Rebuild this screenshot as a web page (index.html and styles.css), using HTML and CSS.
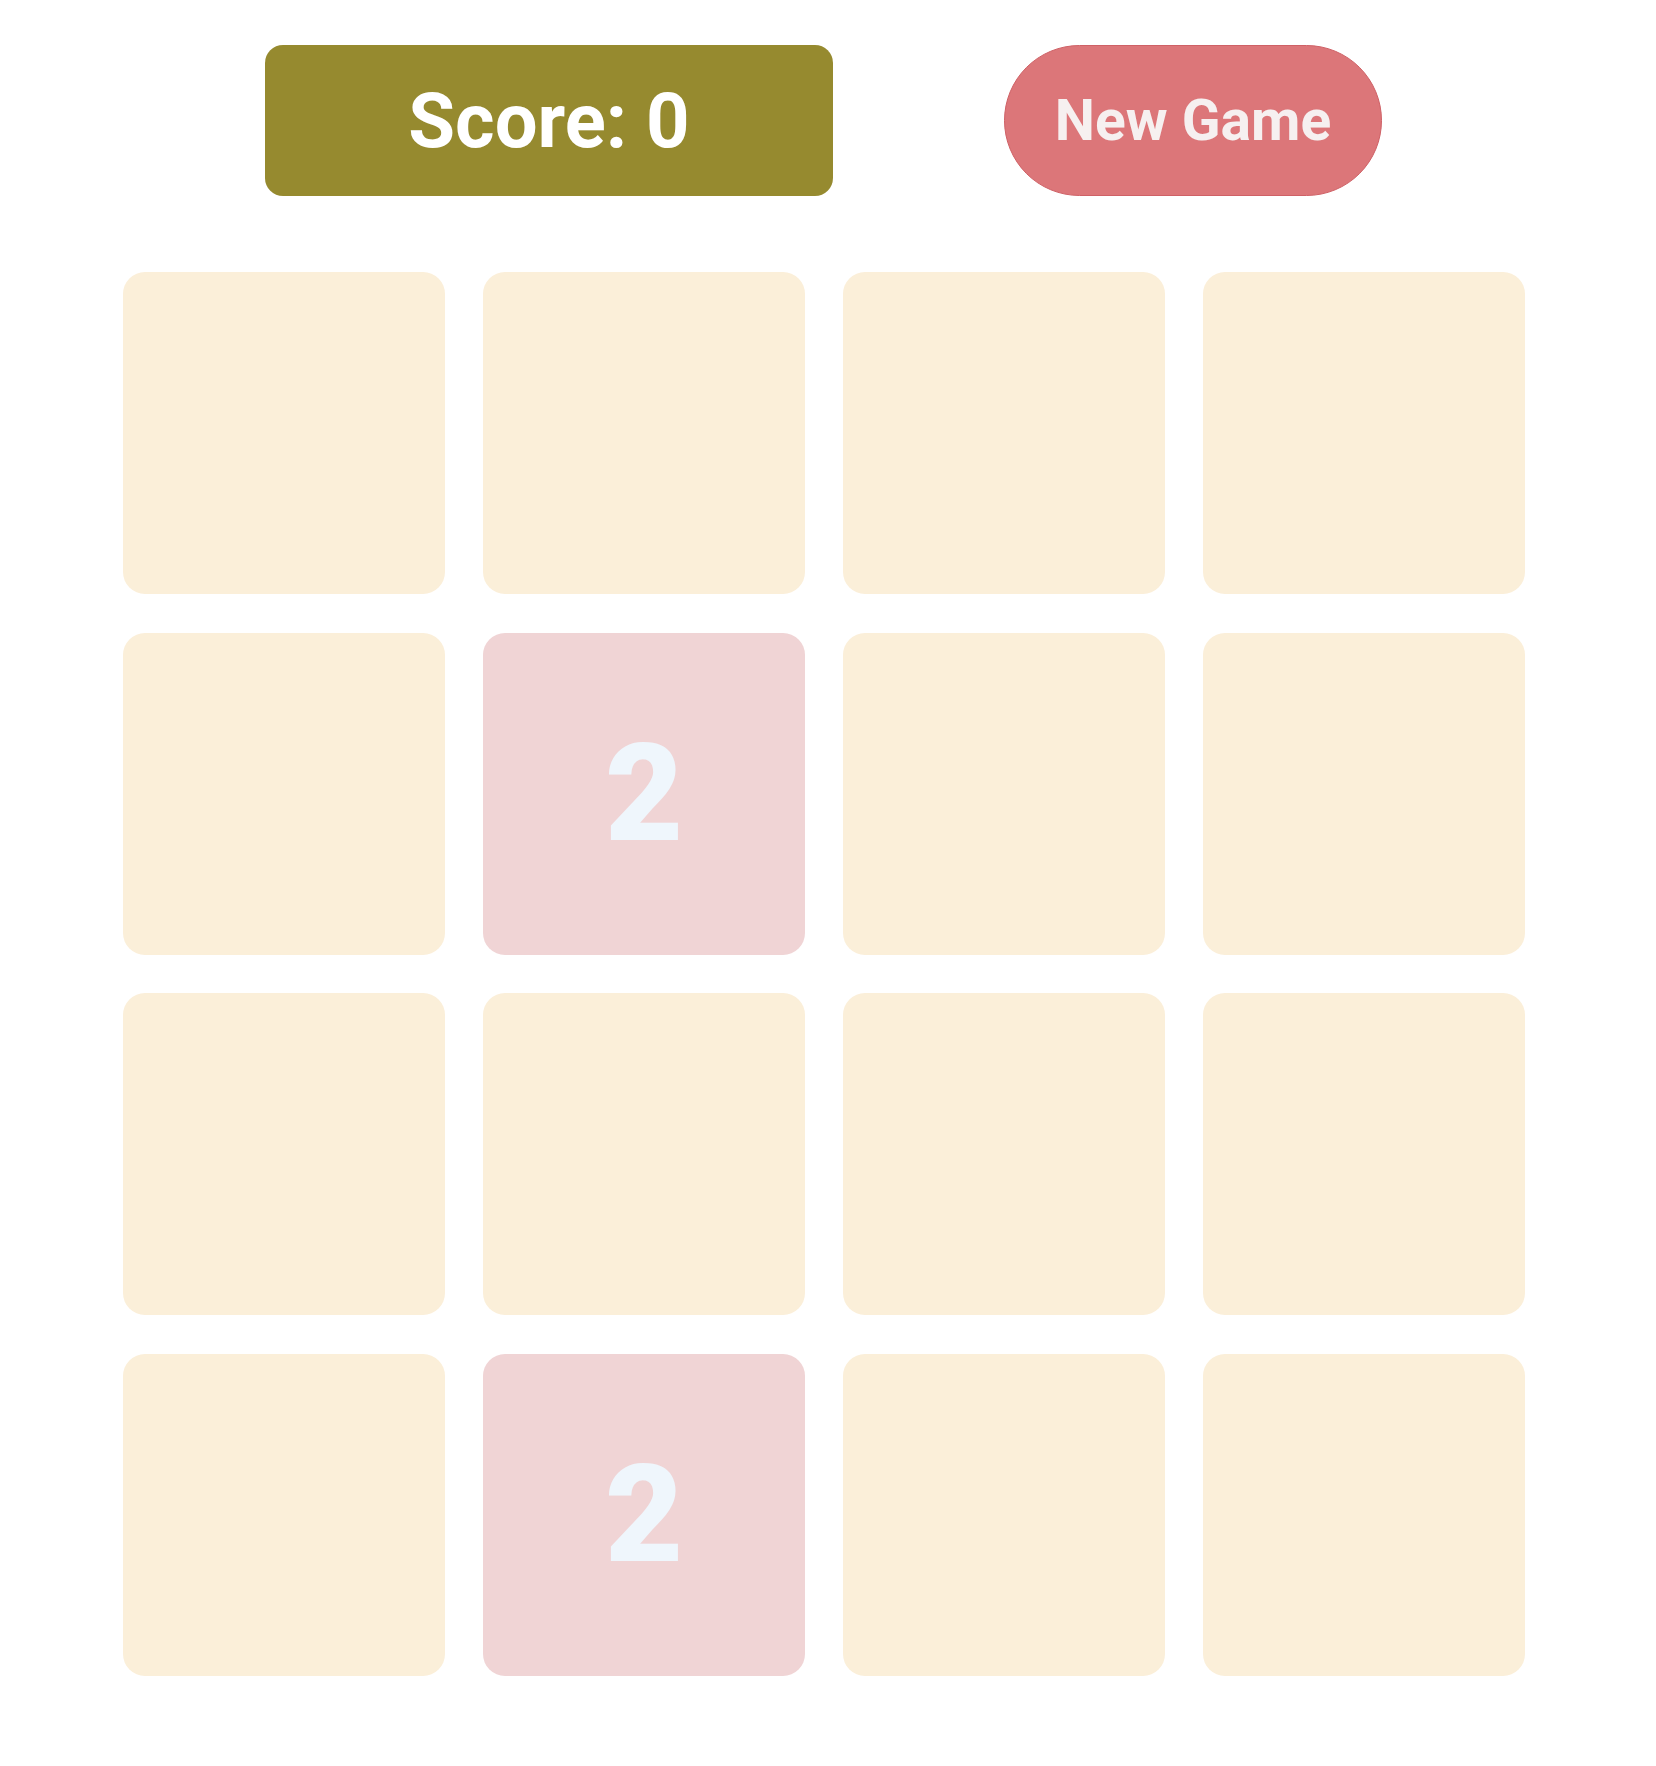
FILE: index.html
```html
<!DOCTYPE html>
<html>
<head>
<meta charset="utf-8">
<title>2048</title>
<link rel="stylesheet" href="styles.css">
</head>
<body>
<div class="game">
  <div class="header">
    <div class="score">Score: 0</div>
    <button class="new-game">New Game</button>
  </div>
  <div class="board">
    <div class="tile"></div><div class="tile"></div><div class="tile"></div><div class="tile"></div>
    <div class="tile"></div><div class="tile tile-2">2</div><div class="tile"></div><div class="tile"></div>
    <div class="tile"></div><div class="tile"></div><div class="tile"></div><div class="tile"></div>
    <div class="tile"></div><div class="tile tile-2">2</div><div class="tile"></div><div class="tile"></div>
  </div>
</div>
</body>
</html>
```
FILE: styles.css
```css
html, body {
  margin: 0;
  padding: 0;
  background: #ffffff;
}
.game {
  font-family: Roboto, "Liberation Sans", sans-serif;
  padding-top: 45px;
}
.header {
  display: flex;
  align-items: center;
  padding-left: 265px;
  gap: 171px;
}
.score {
  width: 568px;
  height: 151px;
  background: #968a2f;
  border-radius: 18px;
  color: #ffffff;
  font-weight: 700;
  font-size: 76px;
  display: flex;
  align-items: center;
  justify-content: center;
}
.new-game {
  width: 378px;
  height: 151px;
  border-radius: 76px;
  background: #dc7679;
  border: 1px solid #cf6166;
  color: #f6f0f0;
  font-family: Roboto, "Liberation Sans", sans-serif;
  font-weight: 700;
  font-size: 57px;
  padding: 0;
  display: flex;
  align-items: center;
  justify-content: center;
}
.board {
  margin: 76px 0 0 123px;
  display: grid;
  grid-template-columns: repeat(4, 322px);
  grid-auto-rows: 322px;
  column-gap: 38px;
  row-gap: 38.5px;
}
.tile {
  background: #fbefd9;
  border-radius: 22px;
  display: flex;
  align-items: center;
  justify-content: center;
  font-size: 135px;
  font-weight: 900;
  color: #eff6fc;
}
.tile-2 {
  background: #f0d4d5;
}
```
